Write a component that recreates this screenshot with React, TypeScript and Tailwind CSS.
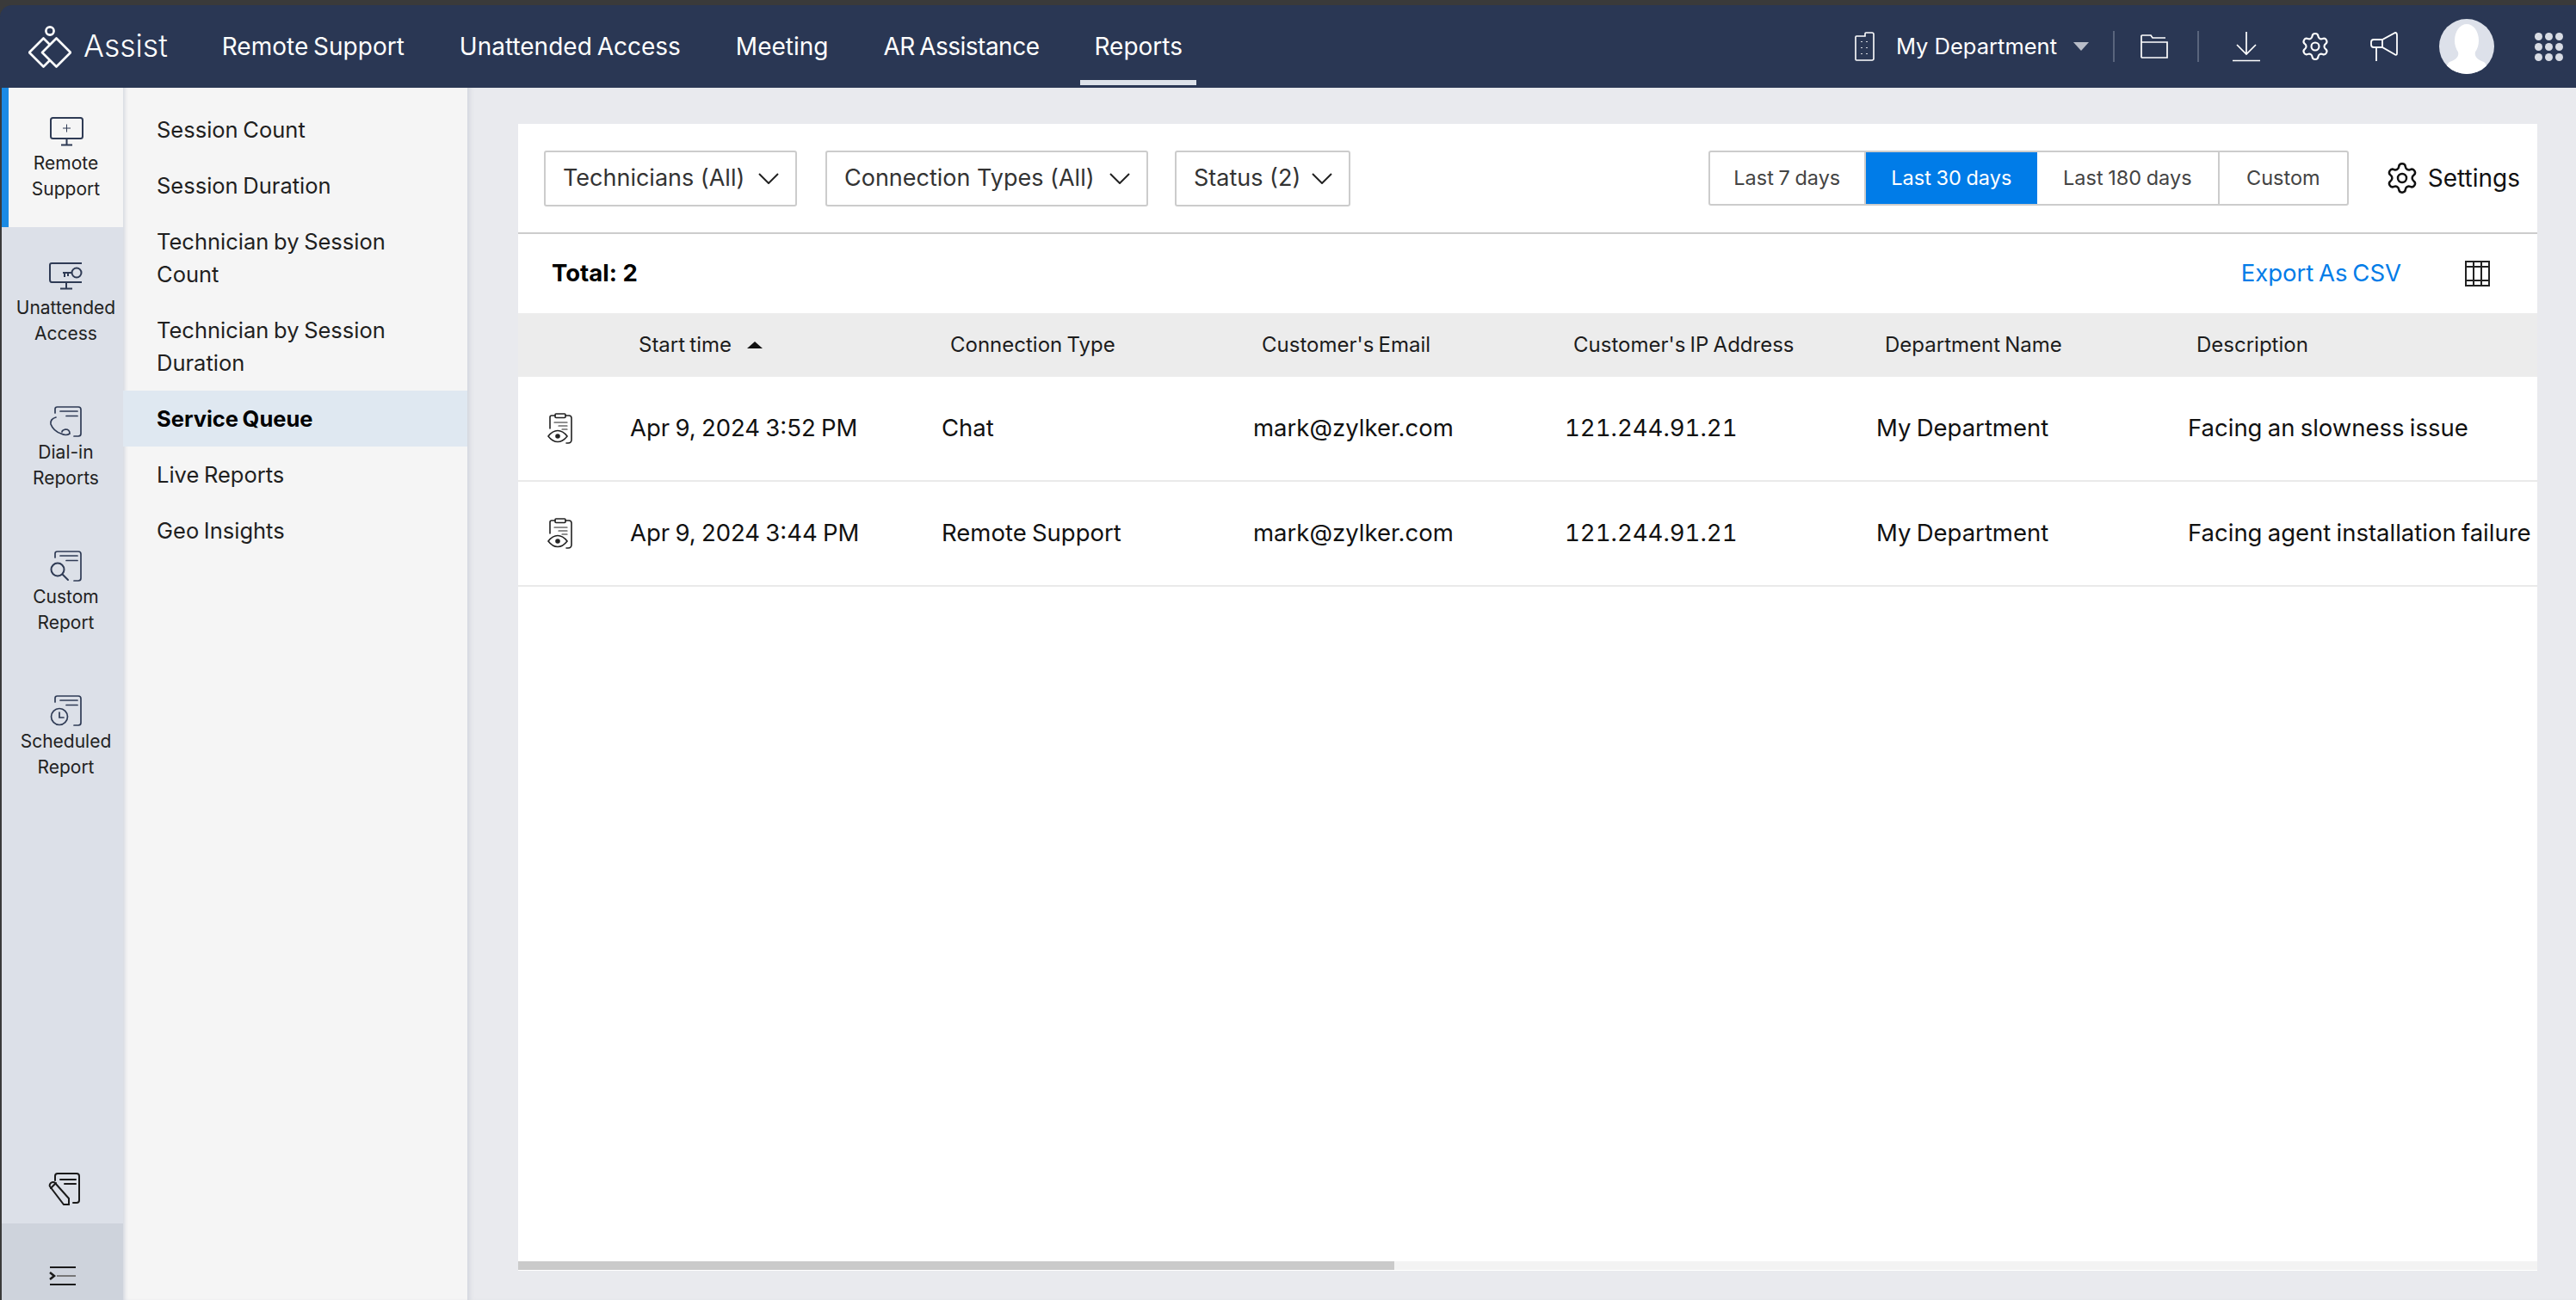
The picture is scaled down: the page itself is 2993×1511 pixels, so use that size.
import { ReactNode } from 'react';
import { Settings } from 'lucide-react';

const topNav = ['Remote Support', 'Unattended Access', 'Meeting', 'AR Assistance', 'Reports'];

const columns = ['Start time', 'Connection Type', "Customer's Email", "Customer's IP Address", 'Department Name', 'Description'];

const rows = [
  ['Apr 9, 2024 3:52 PM', 'Chat', 'mark@zylker.com', '121.244.91.21', 'My Department', 'Facing an slowness issue'],
  ['Apr 9, 2024 3:44 PM', 'Remote Support', 'mark@zylker.com', '121.244.91.21', 'My Department', 'Facing agent installation failure'],
];

const subNav = [
  { label: 'Session Count' },
  { label: 'Session Duration' },
  { label: 'Technician by Session Count' },
  { label: 'Technician by Session Duration' },
  { label: 'Service Queue', active: true },
  { label: 'Live Reports' },
  { label: 'Geo Insights' },
];

function Logo() {
  return (
    <svg width="50" height="50" viewBox="0 0 50 50" fill="none" stroke="white" strokeWidth="2.600" strokeLinejoin="round">
      <circle cx="25" cy="7" r="4.600" />
      <path d="M32.500 15.500 L49 32 L32.500 48.500 L16 32 Z" />
      <path d="M25 23 L17.500 15.500 L1 32 L17.500 48.500 L25 41" />
    </svg>
  );
}

function Chevron() {
  return (
    <svg width="24" height="13" viewBox="0 0 24 13" fill="none" stroke="#222" strokeWidth="2">
      <path d="M1 1 L12 12 L23 1" />
    </svg>
  );
}

function DocShape({ children }: { children?: ReactNode }) {
  return (
    <svg width="40" height="38" viewBox="0 0 40 38" fill="none" stroke="#2f3b55" strokeWidth="1.700" strokeLinecap="round">
      <path d="M7 8 V3.500 Q7 1 9.500 1 H34 Q37 1 37 4 V32 Q37 35 34 35 H29" />
      <path d="M13 6 H33 M20 11.500 H33" />
      {children}
    </svg>
  );
}

function RemoteIcon() {
  return (
    <svg width="40" height="34" viewBox="0 0 40 34" fill="none" stroke="#2f3b55" strokeWidth="2">
      <rect x="2" y="1" width="37" height="24" rx="2.500" />
      <path d="M20.500 25 V32 M14 32.500 H27" />
      <path d="M20.500 8.500 V17.500 M16 13 H25" strokeWidth="1" />
    </svg>
  );
}

function KeyIcon() {
  return (
    <svg width="40" height="34" viewBox="0 0 40 34" fill="none" stroke="#2f3b55" strokeWidth="2">
      <path d="M38 2 H3 Q1 2 1 4 V21 Q1 24 3 24 H38" />
      <path d="M20 24 V31 M13 31.500 H27" />
      <circle cx="32" cy="13" r="5.500" />
      <path d="M26 13 H16 M18 13 V18 M22 13 V17" />
    </svg>
  );
}

function RemoteItemIcon({ kind }: { kind: string }) {
  if (kind === 'remote') return <RemoteIcon />;
  if (kind === 'key') return <KeyIcon />;
  if (kind === 'dial')
    return (
      <DocShape>
        <path d="M8 13 Q1 15 2 21 Q5 29 14 32 Q20 35 24 32 Q24 27 19 27 Q15 28 15 30" />
      </DocShape>
    );
  if (kind === 'custom')
    return (
      <DocShape>
        <circle cx="10" cy="22" r="7.500" strokeWidth="2" />
        <path d="M16 28 L22 34" strokeWidth="2" />
      </DocShape>
    );
  return (
    <DocShape>
      <circle cx="12" cy="25" r="9.500" />
      <path d="M12 20 V26 H17" />
    </DocShape>
  );
}

const sideItems = [
  { kind: 'remote', lines: ['Remote', 'Support'], active: true },
  { kind: 'key', lines: ['Unattended', 'Access'] },
  { kind: 'dial', lines: ['Dial-in', 'Reports'] },
  { kind: 'custom', lines: ['Custom', 'Report'] },
  { kind: 'clock', lines: ['Scheduled', 'Report'] },
];

function ClipboardEye() {
  return (
    <svg width="30" height="36" viewBox="0 0 30 36" fill="none" stroke="#222" strokeWidth="1.600" strokeLinecap="round">
      <path d="M3 18 V5 Q3 3 5 3 H9 M21 3 H25 Q28 3 28 6 V31 Q28 35 24 35 H22" />
      <rect x="9" y="1" width="12" height="4.500" rx="1" />
      <path d="M8 11 H23 M13 15 H23 M17 19 H23" strokeWidth="1.200" />
      <path d="M1 27 Q6 20.500 12 20.500 Q18 20.500 23 27 Q18 33.500 12 33.500 Q6 33.500 1 27 Z" />
      <circle cx="12" cy="27" r="2" fill="#222" />
    </svg>
  );
}

function Filter({ label, width }: { label: string; width: string }) {
  return (
    <div className={`${width} flex h-[65px] items-center justify-between rounded-[3px] border-2 border-[#ccc] pl-[20px] pr-[19px] text-[27px] text-[#333]`}>
      <span>{label}</span>
      <Chevron />
    </div>
  );
}

function Segment({ label, width, active, last }: { label: string; width: string; active?: boolean; last?: boolean }) {
  return (
    <div
      className={`${width} flex h-full items-center justify-center text-[23.500px] [word-spacing:-1px] ${active ? 'bg-[#007ce8] text-white' : 'text-[#444]'} ${last || active ? '' : 'border-r-2 border-[#ccc]'}`}>
      {label}
    </div>
  );
}

export default function App() {
  return (
    <div className="flex h-[1511px] w-[2993px] flex-col overflow-hidden bg-[#3a3a3a] pt-[6px] font-['Inter',sans-serif]">
      <header className="flex h-[96px] shrink-0 items-center rounded-tl-[14px] bg-[#2a3754] text-white">
        <div className="ml-[33px]">
          <Logo />
        </div>
        <span className="ml-[14px] text-[35.500px] font-light leading-none">Assist</span>
        <nav className="ml-[63px] flex gap-[64px] text-[28px] [word-spacing:-2px]">
          {topNav.map((item) => (
            <div key={item} className={`relative whitespace-nowrap ${item === 'AR Assistance' ? 'tracking-[-0.5px]' : ''}`}>
              {item}
              {item === 'Reports' && <span className="absolute -left-[17px] -right-[16px] -bottom-[24px] h-[6px] bg-[#dde2ea]" />}
            </div>
          ))}
        </nav>

        <div className="ml-auto flex items-center">
          <svg width="24" height="34" viewBox="0 0 24 34" fill="none" stroke="white" strokeWidth="1.600">
            <path d="M2 6 Q2 5 3 5 H13 V2 Q13 1 14 1 H21 Q23 1 23 3 V31 Q23 33 21 33 H3 Q2 33 2 32 Z" />
            <path d="M9 11 V12 M15 11 V12 M9 18 V19 M15 18 V19 M9 25 V26 M15 25 V26" />
          </svg>
          <span className="ml-[25px] text-[25.500px] whitespace-nowrap">My Department</span>
          <svg className="ml-[19px]" width="18" height="10" viewBox="0 0 18 10">
            <path d="M0 0 H18 L9 10 Z" fill="#b8bdc8" />
          </svg>
          <div className="ml-[28px] h-[36px] w-[2px] bg-[#59647c]" />
          <svg className="ml-[29px]" width="34" height="30" viewBox="0 0 34 30" fill="none" stroke="white" strokeWidth="1.700">
            <path d="M2 27 V3 Q2 2 3 2 H13 L15 5 H30 M2 10 H32 V28 H3 Q2 28 2 27" />
          </svg>
          <div className="ml-[33px] h-[36px] w-[2px] bg-[#59647c]" />
          <svg className="ml-[38px]" width="34" height="36" viewBox="0 0 34 36" fill="none" stroke="white" strokeWidth="1.700">
            <path d="M17 1 V27 M6 16 L17 27 L28 16 M1 34.500 H33" />
          </svg>
          <Settings className="ml-[45px]" size={36} strokeWidth={1.400} color="white" />
          <svg className="ml-[45px]" width="34" height="36" viewBox="0 0 34 36" fill="none" stroke="white" strokeWidth="1.800">
            <path d="M30 2 Q32 2 32 5 V26 Q32 29 29 27 L15 19 H5 Q2 19 2 16 V13 Q2 10 5 10 H15 Z" />
            <path d="M8 19 V35 M15 10 V19" />
          </svg>
          <div className="ml-[47px] flex h-[64px] w-[64px] items-center justify-center overflow-hidden rounded-full bg-[#dde1ea]">
            <svg width="64" height="64" viewBox="0 0 64 64">
              <ellipse cx="32" cy="25" rx="14" ry="19" fill="white" />
              <path d="M22 38 Q24 46 12 50 Q8 52 8 64 H56 Q56 52 52 50 Q40 46 42 38 Z" fill="white" />
            </svg>
          </div>
          <div className="ml-[47px] mr-[15px] grid grid-cols-3 gap-[3px]">
            {Array.from({ length: 9 }).map((_, i) => (
              <span key={i} className="h-[9px] w-[9px] rounded-full bg-[#d8dce4]" />
            ))}
          </div>
        </div>
      </header>

      <div className="flex min-h-0 flex-1 pl-[2px]">
        <aside className="flex w-[141px] shrink-0 flex-col bg-[#dce0e8]">
          {sideItems.map((item) => (
            <div
              key={item.kind}
              className={`mb-[6px] flex h-[162px] flex-col items-center border-l-[8px] pt-[34px] text-[21px] leading-[30px] text-[#222] ${
                item.active ? 'border-[#1a8ae4] bg-[#f5f5f5]' : 'border-transparent'
              }`}>
              <div className="h-[36px]">
                <RemoteItemIcon kind={item.kind} />
              </div>
              <div className="mt-[3px] text-center">
                {item.lines.map((line) => (
                  <div key={line}>{line}</div>
                ))}
              </div>
            </div>
          ))}
          <div className="mt-auto flex h-[75px] items-center justify-center pb-[4px] pl-[6px]">
            <svg width="40" height="40" viewBox="0 0 40 40" fill="none" stroke="#1a1a1a" strokeWidth="2" strokeLinecap="round">
              <path d="M8 9 V4 Q8 1 11 1 H33 Q36 1 36 4 V32 Q36 35 33 35 H29" />
              <path d="M14 8 H32 M19 13 H32" />
              <path d="M2 16 Q1 14 3 12 Q6 10 8 12 L24 30 V37 H18 Z" />
              <path d="M3 18 L9 12" />
            </svg>
          </div>
          <div className="flex h-[89px] items-start justify-center bg-[#ced3dc] pt-[49px]">
            <svg width="32" height="24" viewBox="0 0 32 24" fill="none" stroke="#1a1a1a" strokeWidth="2">
              <path d="M1 2 H31 M1 22 H31" />
              <path d="M9 12 H31" stroke="#777" />
              <path d="M1 8 L6 12 L1 16" strokeWidth="2.500" />
            </svg>
          </div>
        </aside>

        <div className="w-[400px] shrink-0 bg-[#f5f5f5] pt-[16px] text-[25.500px] leading-[38px] text-[#1f1f1f] shadow-[inset_4px_0_4px_-2px_#d3d7df] [word-spacing:-1.500px]">
          {subNav.map((item) => (
            <div
              key={item.label}
              className={`py-[13.500px] pl-[39px] pr-[30px] ${item.active ? 'bg-[#dfe8f1] font-bold text-black' : ''}`}>
              {item.label}
            </div>
          ))}
        </div>

        <main className="min-w-0 flex-1 bg-[#e9eaee] pb-[34px] pl-[59px] pr-[45px] pt-[42px] shadow-[inset_6px_0_6px_-4px_#cdd1d9]">
          <div className="flex h-full flex-col overflow-hidden bg-white">
            <div className="flex h-[128px] shrink-0 items-center border-b-2 border-[#ccc] pl-[30px] pr-[20px]">
              <Filter label="Technicians (All)" width="w-[294px]" />
              <div className="ml-[33px]">
                <Filter label="Connection Types (All)" width="w-[375px]" />
              </div>
              <div className="ml-[31px]">
                <Filter label="Status (2)" width="w-[204px]" />
              </div>
              <div className="ml-auto flex h-[64px] items-stretch overflow-hidden rounded-[3px] border-2 border-[#ccc]">
                <Segment label="Last 7 days" width="w-[181px]" />
                <Segment label="Last 30 days" width="w-[199px]" active />
                <Segment label="Last 180 days" width="w-[212px]" />
                <Segment label="Custom" width="w-[148px]" last />
              </div>
              <div className="ml-[42px] flex items-center gap-[10px] text-[28px] text-[#111]">
                <Settings size={40} strokeWidth={1.500} color="#111" />
                Settings
              </div>
            </div>

            <div className="flex h-[92px] shrink-0 items-center pl-[39px] pr-[55px]">
              <span className="text-[27.500px] font-bold text-black">Total: 2</span>
              <span className="ml-auto text-[27.500px] text-[#007ce8] [word-spacing:-2px]">Export As CSV</span>
              <svg className="ml-[74px]" width="29" height="30" viewBox="0 0 29 30" fill="none" stroke="#222" strokeWidth="2">
                <rect x="1" y="1" width="27" height="28" />
                <path d="M1 7 H28 M1 23 H28 M10 1 V29 M19 1 V29" />
              </svg>
            </div>

            <div className="grid h-[74px] shrink-0 grid-cols-[129px_repeat(5,362px)_1fr] items-center bg-[#ececec] text-[24px] text-[#1c1c1c] [word-spacing:-1.500px]">
              <div />
              {columns.map((col) => (
                <div key={col} className="flex items-center gap-[18px] whitespace-nowrap pl-[11px]">
                  {col}
                  {col === 'Start time' && (
                    <svg width="18" height="8" viewBox="0 0 18 8">
                      <path d="M9 0 L18 8 H0 Z" fill="#111" />
                    </svg>
                  )}
                </div>
              ))}
            </div>

            {rows.map((row) => (
              <div
                key={row[0]}
                className="grid h-[122px] shrink-0 grid-cols-[129px_repeat(5,362px)_1fr] items-center border-b-2 border-[#eaeaea] text-[27.500px] text-[#111] [word-spacing:-1.500px]">
                <div className="pl-[34px]">
                  <ClipboardEye />
                </div>
                {row.map((cell, i) => (
                  <div key={i} className={`whitespace-nowrap pl-[1px] ${i === 3 ? 'tabular-nums' : ''}`}>
                    {cell}
                  </div>
                ))}
              </div>
            ))}

            <div className="mt-auto mb-[1px] h-[10px] shrink-0 bg-[#f3f3f3]">
              <div className="h-full w-[1018px] bg-[#cacaca]" />
            </div>
          </div>
        </main>
      </div>
    </div>
  );
}
